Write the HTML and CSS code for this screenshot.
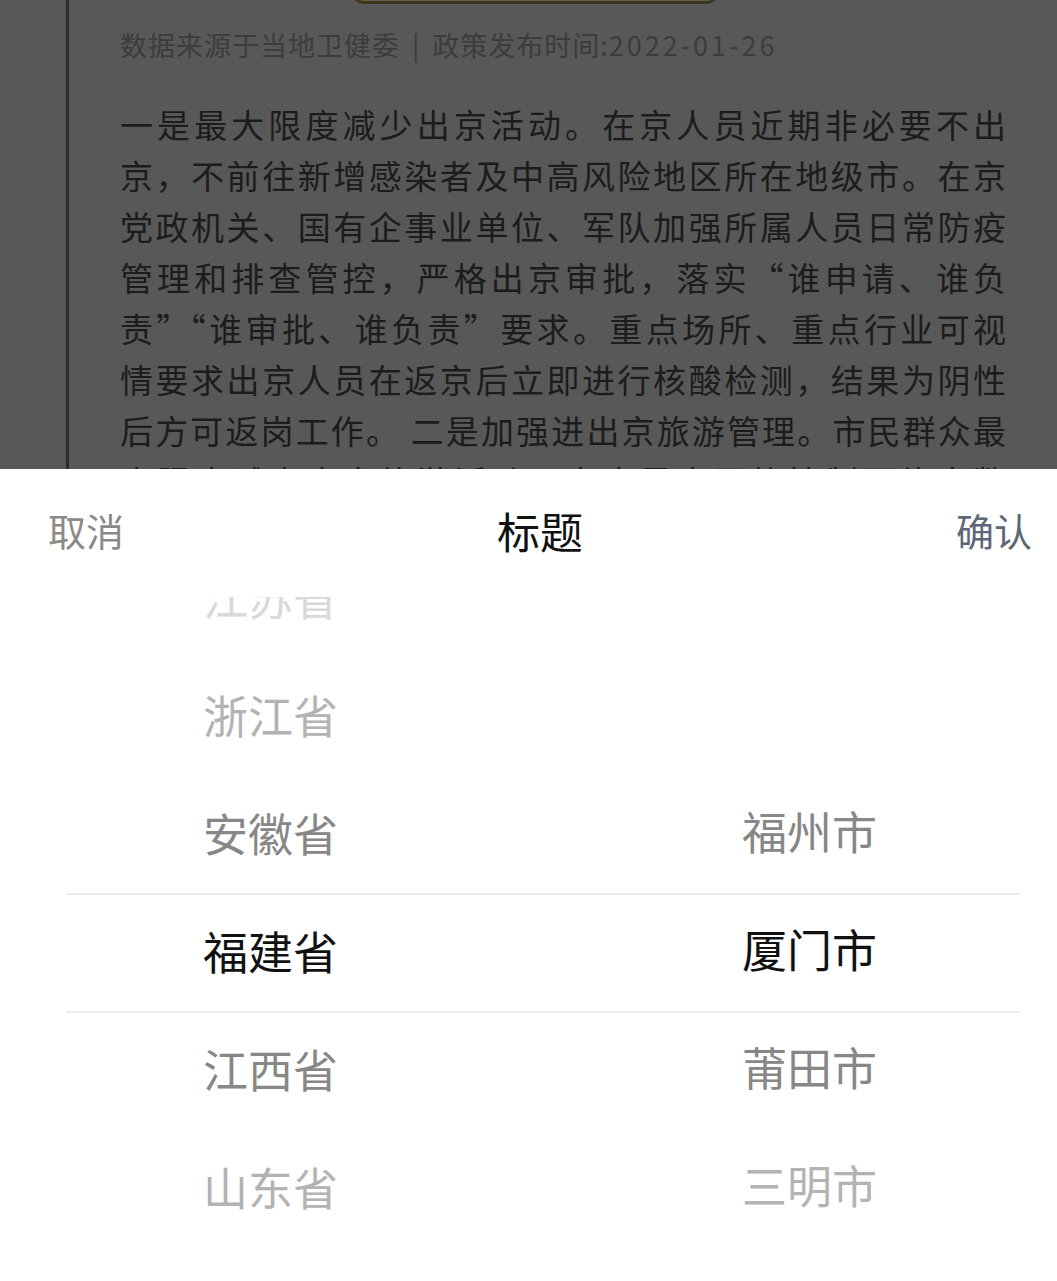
FILE: index.html
```html
<!DOCTYPE html>
<html lang="zh-CN">
<head>
<meta charset="utf-8">
<title>标题</title>
<link rel="stylesheet" href="styles.css">
</head>
<body>
<div class="screen">
  <div class="backdrop">
    <div class="article">
      <div class="gold-btn"></div>
      <div class="source">数据来源于当地卫健委<span class="sep">|</span>政策发布时间:<span class="date">2022-01-26</span></div>
      <div class="text">
        <span class="ln">一是最大限度减少出京活动。在京人员近期非必要不出</span>
        <span class="ln">京，不前往新增感染者及中高风险地区所在地级市。在京</span>
        <span class="ln">党政机关、国有企事业单位、军队加强所属人员日常防疫</span>
        <span class="ln">管理和排查管控，严格出京审批，落实“谁申请、谁负</span>
        <span class="ln">责”“谁审批、谁负责”要求。重点场所、重点行业可视</span>
        <span class="ln">情要求出京人员在返京后立即进行核酸检测，结果为阴性</span>
        <span class="ln">后方可返岗工作。 二是加强进出京旅游管理。市民群众最</span>
        <span class="ln">大限度减少出京旅游活动，京内景点严格控制预约人数</span>
      </div>
    </div>
  </div>
  <div class="sheet">
    <div class="sheet-head">
      <span class="cancel">取消</span>
      <span class="title">标题</span>
      <span class="confirm">确认</span>
    </div>
    <div class="picker">
      <div class="indicator"></div>
      <div class="col col-prov">
        <div class="item d3">江苏省</div>
        <div class="item d2">浙江省</div>
        <div class="item d1">安徽省</div>
        <div class="item sel">福建省</div>
        <div class="item d1">江西省</div>
        <div class="item d2">山东省</div>
        <div class="item d3">河南省</div>
      </div>
      <div class="col col-city">
        <div class="item d1">福州市</div>
        <div class="item sel">厦门市</div>
        <div class="item d1">莆田市</div>
        <div class="item d2">三明市</div>
        <div class="item d3">泉州市</div>
      </div>
    </div>
  </div>
</div>
</body>
</html>
```

FILE: styles.css
```css
* { box-sizing: border-box; }
html, body { margin: 0; padding: 0; }
body {
  width: 1057px;
  height: 1281px;
  overflow: hidden;
  background: #ffffff;
  font-family: "Noto Sans CJK SC", "Noto Sans", sans-serif;
}
.screen {
  display: flex;
  flex-direction: column;
  height: 1281px;
}
.backdrop {
  height: 469px;
  flex: none;
  background: #585858;
  overflow: hidden;
  padding-left: 66px;
}
.article {
  display: flow-root;
  height: 100%;
  border-left: 3px solid #2c2c2c;
  padding-left: 51px;
  width: 940px;
}
.gold-btn {
  width: 366px;
  height: 60px;
  margin-top: -56px;
  margin-left: 232px;
  background: #655e4c;
  border: 2px solid #4a3f22;
  border-top: none;
  border-bottom: 3px solid #3d341c;
  border-radius: 0 0 12px 12px;
}
.source {
  margin-top: 21px;
  height: 40px;
  line-height: 40px;
  font-size: 27px;
  color: #3c3c3c;
  letter-spacing: 1px;
  white-space: nowrap;
}
.sep {
  margin: 0 12px;
}
.date {
  letter-spacing: 3px;
}
.text {
  margin-top: 34px;
  width: 886px;
  font-size: 33px;
  line-height: 51px;
  color: #1c1c1c;
}
.ln {
  display: block;
  white-space: nowrap;
  text-align: justify;
  text-align-last: justify;
}
.sheet {
  flex: 1;
  background: #ffffff;
  display: flex;
  flex-direction: column;
  overflow: hidden;
}
.sheet-head {
  height: 128px;
  flex: none;
  display: flex;
  align-items: center;
  justify-content: space-between;
  padding: 0 25px 6px 48px;
}
.cancel, .confirm {
  font-size: 38px;
  line-height: 1;
}
.cancel { color: #8a8a8a; }
.confirm { color: #5d6778; }
.title {
  font-size: 43px;
  line-height: 1;
  color: #121212;
}
.picker {
  position: relative;
  flex: 1;
  overflow: hidden;
  display: grid;
  grid-template-columns: 540px 1fr;
  align-items: start;
}
.indicator {
  position: absolute;
  left: 66px;
  right: 37px;
  top: 296px;
  height: 120px;
  border-top: 2px solid #ececec;
  border-bottom: 2px solid #ececec;
  pointer-events: none;
}
.col-prov {
  margin-top: -55px;
  padding-left: 203px;
}
.col-city {
  margin-top: 181px;
  padding-left: 202px;
}
.col-city .item:first-child { margin-top: -2px; }
.item {
  height: 118px;
  line-height: 110px;
  padding-bottom: 8px;
  font-size: 45px;
  white-space: nowrap;
}
.sel { color: #111111; }
.d1 { color: #878787; }
.d2 { color: #b3b3b3; }
.d3 { color: #d9d9d9; }
```
